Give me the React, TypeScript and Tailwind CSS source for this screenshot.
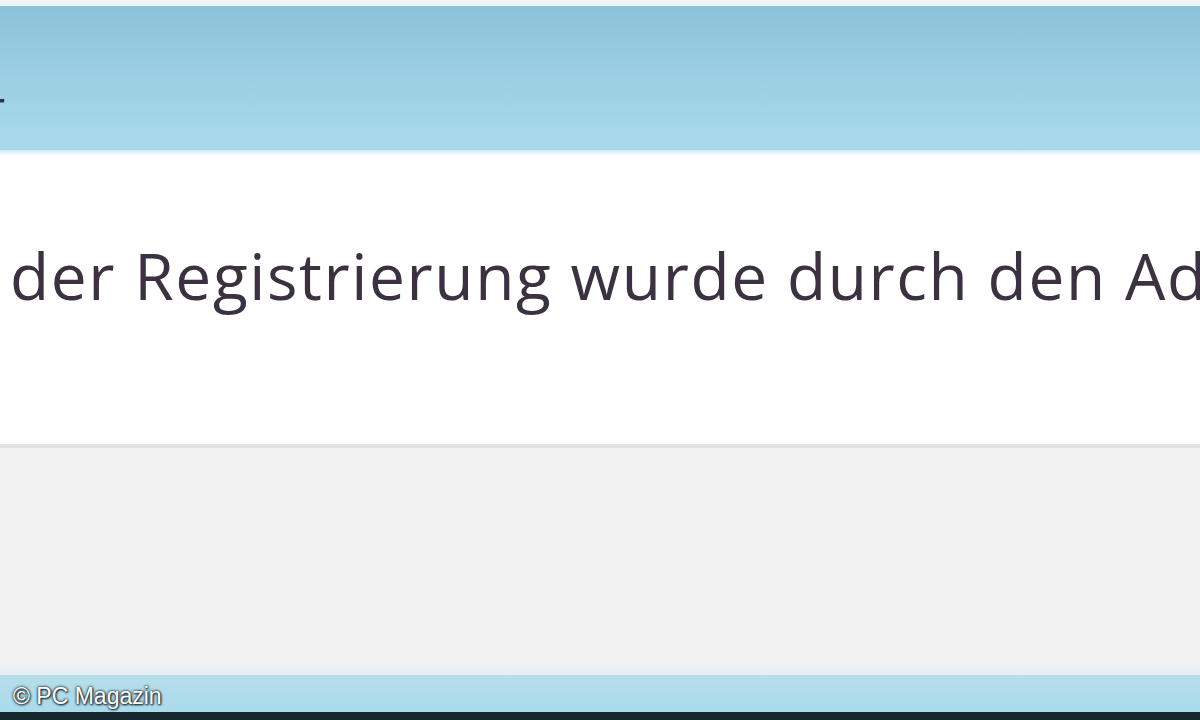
export default function App() {
  return (
    <div className="flex h-[720px] w-[1200px] flex-col overflow-hidden bg-white">
      <div className="h-[6px] bg-[#eef3f6]" />
      <div className="flex h-[144px] items-start bg-gradient-to-b from-[#8cc2d9] via-[#9ccfe3] to-[#a9daec] pt-[78px]">
        <div className="flex w-[5px] justify-end overflow-hidden">
          <span className="whitespace-nowrap font-['Open_Sans',sans-serif] text-[44px] leading-none text-[#3a2a35]">r</span>
        </div>
      </div>
      <div className="h-[6px] bg-gradient-to-b from-[#cfe9f3] to-white" />
      <div className="flex h-[288px] items-start overflow-hidden bg-white pl-[10px] pt-[88px]">
        <span className="whitespace-nowrap font-['Open_Sans',sans-serif] text-[64px] leading-none tracking-[1.6px] text-[#3b3140]">
          der Registrierung wurde durch den Administrator
        </span>
      </div>
      <div className="h-[4px] bg-[#e3e3e3]" />
      <div className="flex-1 bg-[#f2f2f2]" />
      <div className="h-[12px] bg-gradient-to-b from-[#eef1f4] to-[#e6eef4]" />
      <div className="flex h-[37px] items-center bg-gradient-to-b from-[#b7dde9] to-[#a9dbec] pb-[0px] pl-[13px] pt-[6px]">
        <span className="font-['Liberation_Sans',sans-serif] text-[23px] leading-none text-white [text-shadow:0_0_3px_#1c2d33,0_0_2px_#1c2d33,1px_1px_2px_#1c2d33]">
          © PC Magazin
        </span>
      </div>
      <div className="h-[8px] bg-[#15262c]" />
    </div>
  );
}
